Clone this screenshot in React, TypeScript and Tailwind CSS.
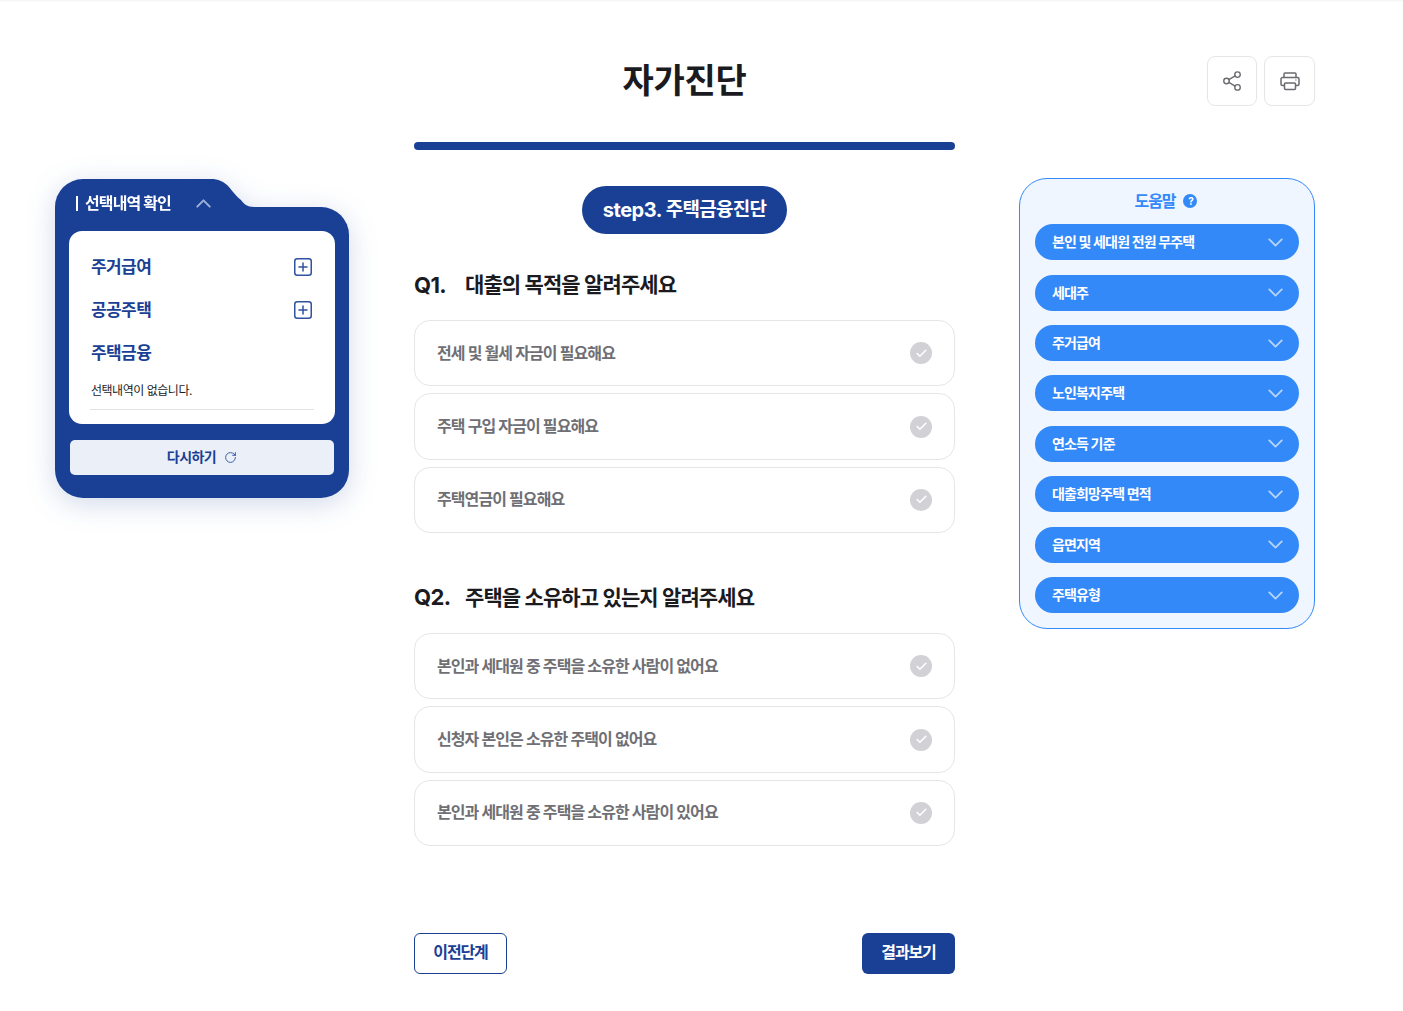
import { Share2, RotateCw, ChevronUp, ChevronDown, Check } from "lucide-react";

const q1 = ["전세 및 월세 자금이 필요해요", "주택 구입 자금이 필요해요", "주택연금이 필요해요"];
const q2 = ["본인과 세대원 중 주택을 소유한 사람이 없어요", "신청자 본인은 소유한 주택이 없어요", "본인과 세대원 중 주택을 소유한 사람이 있어요"];
const help = ["본인 및 세대원 전원 무주택", "세대주", "주거급여", "노인복지주택", "연소득 기준", "대출희망주택 면적", "읍면지역", "주택유형"];

function Category({ label, plus }: { label: string; plus?: boolean }) {
  return (
    <div className="flex h-[43px] items-center justify-between pl-[22px] pr-[23px]">
      <span className="pt-px text-[17px] font-bold leading-none tracking-[-0.035em] text-[#1a4096]">{label}</span>
      {plus && (
        <svg width="18" height="18" viewBox="0 0 18 18" fill="none" stroke="#2f52a1" strokeWidth="1.5" strokeLinecap="round">
          <rect x="0.75" y="0.75" width="16.5" height="16.5" rx="2.5" />
          <path d="M9 5v8M5 9h8" />
        </svg>
      )}
    </div>
  );
}

function Option({ label }: { label: string }) {
  return (
    <div className="flex h-[66.4px] items-center justify-between rounded-[16px] border border-[#e6e6e9] bg-white pl-[22px] pr-[22px]">
      <span className="pb-px text-[16px] font-semibold tracking-[-0.058em] text-[#6f6f75]">{label}</span>
      <span className="flex h-[22px] w-[22px] items-center justify-center rounded-full bg-[#d1d1d6] text-white">
        <Check size={13} strokeWidth={3} />
      </span>
    </div>
  );
}

function Question({ n, text, items, gapClass }: { n: string; text: string; items: string[]; gapClass: string }) {
  return (
    <section className={gapClass}>
      <h2 className="flex h-[32px] items-center pt-[2px] font-semibold text-[#1b1b1f]">
        <span className="w-[51px] text-[22px] font-bold tracking-[-0.03em]">{n}</span>
        <span className="text-[21px] tracking-[-0.044em]">{text}</span>
      </h2>
      <div className="mt-[20px] flex flex-col gap-[7px]">
        {items.map((t) => (
          <Option key={t} label={t} />
        ))}
      </div>
    </section>
  );
}

export default function App() {
  return (
    <div className="min-h-[1011px] bg-white" style={{ fontFamily: "Inter, 'Noto Sans CJK KR', sans-serif" }}>
      <div className="h-[2px] bg-gradient-to-b from-[#f3f3f5] to-white" />
      <main className="grid grid-cols-[295px_541px_296px] items-start pl-[55px] pt-[54px] [column-gap:64px]">
        {/* Left selection card */}
        <aside className="mt-[123px] w-[294px] drop-shadow-[0_6px_14px_rgba(26,64,150,0.2)]">
          <div className="relative z-10 flex h-[28px]">
            <div className="h-[28px] w-[157px] rounded-tl-[28px] bg-[#1a4096] pl-[21px] pt-[15px]">
              <div className="relative z-10 flex h-[18px] items-center whitespace-nowrap text-[16px] font-bold tracking-[-0.055em] text-white">
                <span className="mr-[7px] h-[15px] w-[2px] shrink-0 bg-white" />
                선택내역 확인
                <ChevronUp size={25} strokeWidth={1.9} className="ml-[20.5px] shrink-0 text-[#9db0d6]" />
              </div>
            </div>
            <svg width="43" height="28" viewBox="0 0 43 28" className="-ml-px block">
              <path d="M0 0 C7 0 13 2.5 18 8 C22 13 26 18 30 21 C33 25 36 28 43 28 L0 28 Z" fill="#1a4096" />
            </svg>
          </div>
          <div className="rounded-b-[28px] rounded-tr-[28px] bg-[#1a4096] px-[14px] pb-[23px] pt-[24px]">
            <div className="rounded-[13px] bg-white pb-[14px] pt-[14.5px]">
              <Category label="주거급여" plus />
              <Category label="공공주택" plus />
              <Category label="주택금융" />
              <p className="mx-[21px] mt-[7px] border-b border-[#e3e3e6] pb-[10.5px] pl-px text-[12px] leading-[17px] tracking-[-0.04em] text-[#1b1b1f]">
                선택내역이 없습니다.
              </p>
            </div>
            <button className="mx-px mt-[16px] flex h-[35px] w-[264px] items-center justify-center gap-[8px] rounded-[5px] bg-[#eaeff8] pb-[2px] text-[14px] font-semibold tracking-[-0.04em] text-[#1a4096]">
              다시하기
              <RotateCw size={13} strokeWidth={1.5} className="mt-[2px]" />
            </button>
          </div>
        </aside>

        {/* Center */}
        <div>
          <div className="flex h-[50px] items-center justify-center pb-[2px]">
            <h1 className="text-[34px] font-bold tracking-[-0.01em] text-[#1b1b1f]">자가진단</h1>
          </div>
          <div className="mt-[36px] h-[8px] rounded-full bg-[#1a4096]" />
          <div className="mt-[36px] flex justify-center">
            <div className="flex h-[48px] w-[205px] items-center justify-center gap-[4px] rounded-full bg-[#1a4096] font-bold text-white">
              <span className="text-[20px] tracking-[-0.025em]">step3.</span>
              <span className="text-[19px] tracking-[-0.04em]">주택금융진단</span>
            </div>
          </div>
          <Question n="Q1." text="대출의 목적을 알려주세요" items={q1} gapClass="mt-[34px]" />
          <Question n="Q2." text="주택을 소유하고 있는지 알려주세요" items={q2} gapClass="mt-[47.8px]" />
          <div className="mt-[86.8px] flex items-center justify-between">
            <button className="h-[41px] w-[93px] rounded-[6px] border border-[#1a4096] bg-white pb-[2px] text-[16px] font-semibold tracking-[-0.07em] text-[#1a4096]">
              이전단계
            </button>
            <button className="h-[41px] w-[93px] rounded-[6px] bg-[#1a4096] pb-[2px] text-[16px] font-semibold tracking-[-0.07em] text-white">
              결과보기
            </button>
          </div>
        </div>

        {/* Right */}
        <div>
          <div className="flex justify-end gap-[7px]">
            <button className="flex h-[50px] w-[50px] items-center justify-center rounded-[8px] border border-[#e6e6e9] text-[#6a6a70]">
              <Share2 size={22} strokeWidth={1.5} />
            </button>
            <button className="flex h-[50px] w-[51px] items-center justify-center rounded-[8px] border border-[#e6e6e9]">
              <svg width="20" height="20" viewBox="0 0 20 20" fill="none" stroke="#6a6a70" strokeWidth="1.5" strokeLinejoin="round">
                <path d="M4 6.5V3a1 1 0 0 1 1-1h10a1 1 0 0 1 1 1v3.5" />
                <path d="M4.5 14.5H2.5a1.5 1.5 0 0 1-1.5-1.5V8a1.5 1.5 0 0 1 1.5-1.5h15A1.5 1.5 0 0 1 19 8v5a1.5 1.5 0 0 1-1.5 1.5h-2" />
                <rect x="4.5" y="12" width="11" height="6.5" rx="1" />
                <path d="M15.5 9h.8" />
              </svg>
            </button>
          </div>
          <div className="mt-[72px] rounded-[28px] border border-[#3389f8] bg-[#eff6ff] px-[15px] pb-[14.7px] pt-[11.3px]">
            <div className="flex h-[22px] items-center justify-center gap-[8px] pr-[2px] text-[16px] font-bold tracking-[-0.07em] text-[#3389f8]">
              도움말
              <span className="flex h-[14px] w-[14px] items-center justify-center rounded-full bg-[#3389f8] text-[10px] font-bold leading-none text-white">?</span>
            </div>
            <div className="mt-[12px] flex flex-col gap-[14.4px]">
              {help.map((h) => (
                <div key={h} className="flex h-[36px] items-center justify-between rounded-full bg-[#3389f8] pl-[17px] pr-[11.5px] text-[14px] font-bold tracking-[-0.06em] text-white">
                  <span className="pb-px">{h}</span>
                  <ChevronDown size={25} strokeWidth={1.7} className="text-[#b5d4fb]" />
                </div>
              ))}
            </div>
          </div>
        </div>
      </main>
    </div>
  );
}
